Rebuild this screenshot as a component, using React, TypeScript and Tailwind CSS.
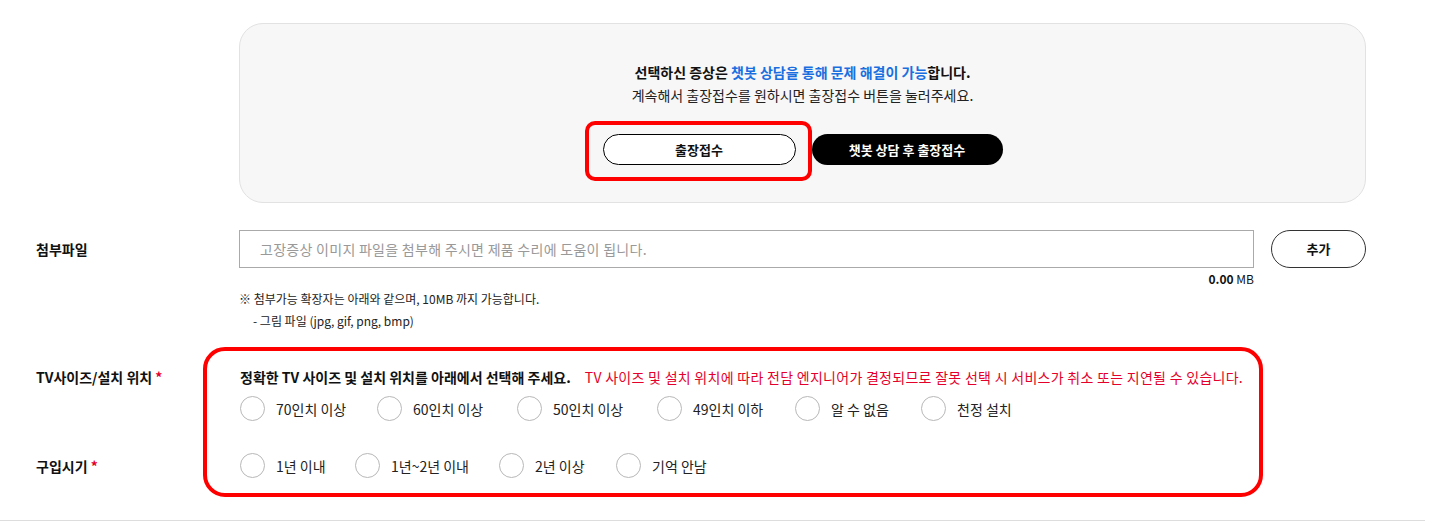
import React from "react";

const font = { fontFamily: '"Noto Sans CJK KR", "Noto Sans", sans-serif' };

function Radio({ label, w }: { label: string; w: string }) {
  return (
    <div className={`flex items-center ${w}`}>
      <span className="w-[25px] h-[25px] rounded-full border border-[#b8b8b8] bg-white shrink-0" />
      <span className="ml-[11px] text-[14px] leading-[20px] text-[#222] whitespace-nowrap">{label}</span>
    </div>
  );
}

export default function App() {
  return (
    <div className="relative w-[1438px] h-[524px] bg-white text-[#111] overflow-hidden" style={font}>
      {/* Gray info box */}
      <div className="ml-[239px] mt-[23px] w-[1127px] h-[180px] rounded-[24px] border border-[#e2e2e2] bg-[#f7f7f7] flex flex-col items-center pt-[37px]">
        <p className="text-[14px] leading-[23px] font-bold">
          선택하신 증상은 <span className="text-[#1a6fe0]">챗봇 상담을 통해 문제 해결이 가능</span>합니다.
        </p>
        <p className="text-[14px] leading-[23px] text-[#222]">
          계속해서 출장접수를 원하시면 출장접수 버튼을 눌러주세요.
        </p>
        <div className="mt-[27px] flex gap-[16px]">
          <div className="relative">
            <button className="w-[193px] h-[31px] rounded-full border border-black bg-white text-[13px] font-bold">
              출장접수
            </button>
            <span className="absolute -left-[18px] -top-[13px] -right-[16px] -bottom-[16px] rounded-[10px] border-[4px] border-[#ff0000] pointer-events-none" />
          </div>
          <button className="w-[191px] h-[31px] rounded-full bg-black text-white text-[13px] font-bold">
            챗봇 상담 후 출장접수
          </button>
        </div>
      </div>

      {/* Attachment row */}
      <div className="mt-[27px] flex items-center">
        <div className="w-[239px] pl-[36px] text-[14px] font-bold">첨부파일</div>
        <div className="w-[1015px] h-[38px] border border-[#aaaaaa] flex items-center pl-[20px] text-[14px] text-[#999] tracking-[0.02em]">
          고장증상 이미지 파일을 첨부해 주시면 제품 수리에 도움이 됩니다.
        </div>
        <button className="ml-[17px] w-[95px] h-[38px] rounded-full border border-[#333] bg-white text-[13px] font-bold">
          추가
        </button>
      </div>
      <div className="w-[1254px] text-right mt-[2px] text-[12px] leading-[18px]">
        <span className="font-bold">0.00</span> MB
      </div>
      <div className="ml-[239px] text-[12px] leading-[22px] text-[#222]">
        <p>※ 첨부가능 확장자는 아래와 같으며, 10MB 까지 가능합니다.</p>
        <p className="pl-[14px]">- 그림 파일 (jpg, gif, png, bmp)</p>
      </div>

      {/* TV size / purchase */}
      <div className="relative mt-[24px]">
        <span className="absolute left-[203px] top-[-9px] w-[1060px] h-[150px] rounded-[22px] border-[4px] border-[#ff0000] pointer-events-none" />
        <div className="flex pt-[11px]">
          <div className="w-[240px] pl-[36px] text-[14px] leading-[20px] font-bold">
            TV사이즈/설치 위치 <span className="text-[#e4002b]">*</span>
          </div>
          <div>
            <p className="text-[14px] leading-[20px] whitespace-nowrap">
              <span className="font-bold">정확한 TV 사이즈 및 설치 위치를 아래에서 선택해 주세요.</span>
              <span className="ml-[14px] text-[#e4002b] tracking-[0.02em]">TV 사이즈 및 설치 위치에 따라 전담 엔지니어가 결정되므로 잘못 선택 시 서비스가 취소 또는 지연될 수 있습니다.</span>
            </p>
            <div className="mt-[9px] flex">
              <Radio label="70인치 이상" w="w-[137px]" />
              <Radio label="60인치 이상" w="w-[140px]" />
              <Radio label="50인치 이상" w="w-[140px]" />
              <Radio label="49인치 이하" w="w-[138px]" />
              <Radio label="알 수 없음" w="w-[126px]" />
              <Radio label="천정 설치" w="w-[120px]" />
            </div>
          </div>
        </div>
        <div className="flex items-center mt-[32px]">
          <div className="w-[240px] pl-[36px] text-[14px] leading-[20px] font-bold">
            구입시기 <span className="text-[#e4002b]">*</span>
          </div>
          <div className="flex">
            <Radio label="1년 이내" w="w-[115px]" />
            <Radio label="1년~2년 이내" w="w-[144px]" />
            <Radio label="2년 이상" w="w-[117px]" />
            <Radio label="기억 안남" w="w-[120px]" />
          </div>
        </div>
      </div>

      <div className="absolute left-0 top-[520px] w-[1425px] border-t border-[#dddddd]" />
    </div>
  );
}
